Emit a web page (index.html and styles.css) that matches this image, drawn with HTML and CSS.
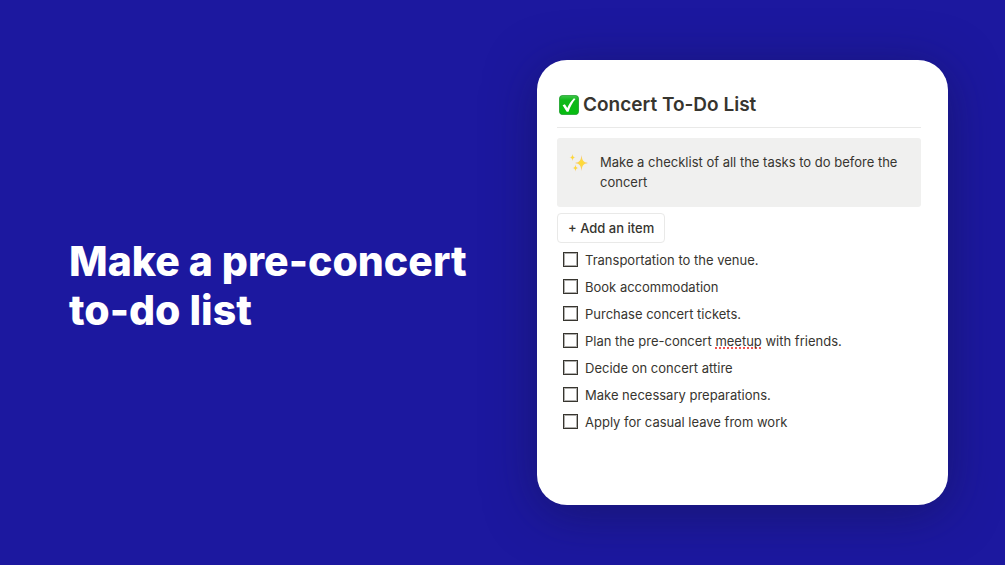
FILE: index.html
```html
<!DOCTYPE html>
<html lang="en">
<head>
<meta charset="utf-8">
<meta name="viewport" content="width=device-width, initial-scale=1">
<title>Make a pre-concert to-do list</title>
<link rel="stylesheet" href="styles.css">
</head>
<body>
<main class="slide">
  <h1 class="headline">Make a pre-concert to-do list</h1>
  <section class="card">
    <h2 class="card-title">
      <svg class="check-icon" viewBox="0 0 20 20" aria-hidden="true">
        <defs><linearGradient id="green" x1="0" y1="0" x2="0" y2="1"><stop offset="0" stop-color="#3fc64b"/><stop offset="0.25" stop-color="#10b71a"/><stop offset="1" stop-color="#06bd10"/></linearGradient></defs>
        <rect x="0.4" y="0.4" width="19.2" height="19.2" rx="3.4" fill="url(#green)" stroke="#169a27" stroke-width="0.8"/>
        <path d="M3.600 10.300 5.900 9.300 8.300 12.900C9.900 9.300 12 6 14.900 3.200L16.500 3.900C13.400 7.600 11.200 11.700 9.500 16.700H7.700Z" fill="#fff"/>
      </svg>
      <span>Concert To-Do List</span>
    </h2>
    <div class="callout">
      <svg class="sparkle-icon" viewBox="0 0 20 20" aria-hidden="true">
        <defs><radialGradient id="gold"><stop offset="0" stop-color="#ffdc2e"/><stop offset="0.5" stop-color="#fbd552"/><stop offset="1" stop-color="#f4b878"/></radialGradient></defs>
        <path d="M12.500 3C13.200 8.500 14.200 10.100 19 11C14.200 11.900 13.200 13.500 12.500 19C11.800 13.500 10.800 11.900 6 11C10.800 10.100 11.800 8.500 12.500 3Z" fill="url(#gold)"/>
        <path d="M3.500 2C3.800 4.600 4.400 5.200 6.500 5.500C4.400 5.800 3.800 6.400 3.500 9C3.200 6.400 2.600 5.800 0.500 5.500C2.600 5.200 3.200 4.600 3.500 2Z" fill="url(#gold)"/>
        <path d="M6.500 12.500C6.800 15.100 7.400 15.700 9.500 16C7.400 16.300 6.800 16.900 6.500 19.500C6.200 16.900 5.600 16.300 3.500 16C5.600 15.700 6.200 15.100 6.500 12.500Z" fill="url(#gold)"/>
      </svg>
      <p class="callout-text">Make a checklist of all the tasks to do before the concert</p>
    </div>
    <button class="add-button" type="button">+ Add an item</button>
    <ul class="tasks">
      <li><label class="task"><input class="box" type="checkbox"><span>Transportation to the venue.</span></label></li>
      <li><label class="task"><input class="box" type="checkbox"><span>Book accommodation</span></label></li>
      <li><label class="task"><input class="box" type="checkbox"><span>Purchase concert tickets.</span></label></li>
      <li><label class="task"><input class="box" type="checkbox"><span>Plan the pre-concert <span class="misspelled">meetup</span> with friends.</span></label></li>
      <li><label class="task"><input class="box" type="checkbox"><span>Decide on concert attire</span></label></li>
      <li><label class="task"><input class="box" type="checkbox"><span>Make necessary preparations.</span></label></li>
      <li><label class="task"><input class="box" type="checkbox"><span>Apply for casual leave from work</span></label></li>
    </ul>
  </section>
</main>
</body>
</html>
```
FILE: styles.css
```css
* {
  box-sizing: border-box;
}

body {
  margin: 0;
  background: #1c189f;
  color: #37352f;
  font-family: Inter, "Liberation Sans", sans-serif;
  font-size: 13px;
  line-height: 20px;
}

.slide {
  display: grid;
  grid-template-columns: minmax(0, 1fr) minmax(0, 411px);
  column-gap: 60px;
  align-items: center;
  min-height: 100vh;
  padding: 24px 57px 24px 69px;
}

.headline {
  margin: 7px 0 0;
  color: #fff;
  font-size: 41px;
  font-weight: 800;
  line-height: 49px;
}

.card {
  padding: 31px 27px 70px 20px;
  border-radius: 30px;
  background: #fff;
  box-shadow: 0 8px 50px rgba(20, 20, 70, 0.5);
}

.card-title {
  display: flex;
  align-items: center;
  gap: 4px;
  margin: 0 0 10px;
  padding: 0 0 8px 2px;
  border-bottom: 1px solid #e9e9e8;
  font-size: 19px;
  font-weight: 600;
  line-height: 28px;
}

.check-icon,
.sparkle-icon {
  flex: none;
  width: 20px;
  height: 20px;
}

.callout {
  display: flex;
  gap: 11px;
  margin-bottom: 6px;
  padding: 14px 12px;
  border-radius: 3px;
  background: #f0f0ef;
}

.callout-text {
  margin: 0 0 1px;
}

.add-button {
  display: block;
  height: 30px;
  padding: 0 10px;
  border: 1px solid #e9e9e8;
  border-radius: 4px;
  background: #fff;
  color: inherit;
  font: inherit;
  font-weight: 500;
}

.tasks {
  margin: 3px 0 0;
  padding: 0 0 0 6px;
  list-style: none;
}

.task {
  display: flex;
  align-items: center;
  gap: 7px;
  min-height: 27px;
}

.box {
  flex: none;
  appearance: none;
  width: 15px;
  height: 15px;
  margin: 0;
  border: 1px solid #37352f;
  outline: 1px solid rgba(55, 53, 47, 0.4);
  outline-offset: -2px;
  background: #fff;
}

.box:checked {
  background: #37352f;
}

.box:focus-visible {
  outline: 2px solid #1c189f;
  outline-offset: 1px;
}

.misspelled {
  text-decoration: underline dotted #ef5350 2px;
  text-decoration-skip-ink: none;
  text-underline-offset: 2px;
}
```
